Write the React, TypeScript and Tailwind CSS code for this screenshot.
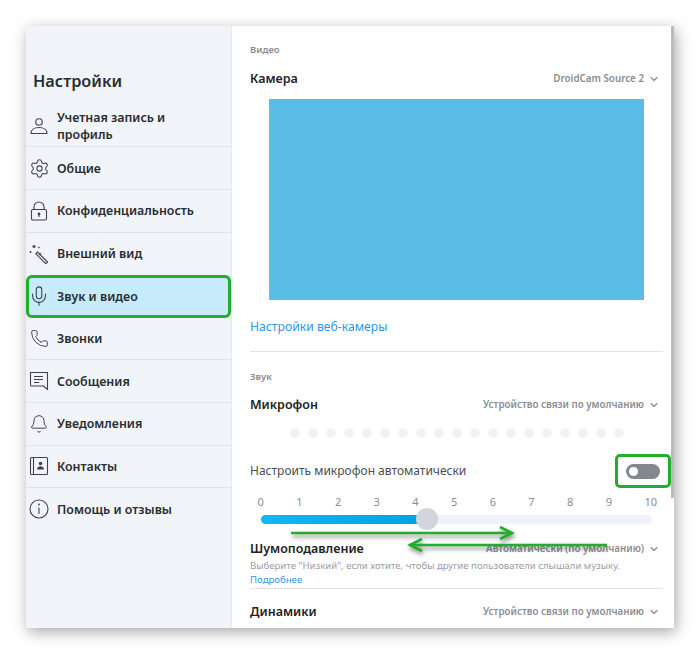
import type { ReactNode } from 'react';
import { Settings, Mic, Phone, Bell, ChevronDown } from 'lucide-react';

const Icon = ({ children }: { children: ReactNode }) => (
  <svg width="20" height="20" viewBox="0 0 20 20" fill="none" stroke="#3f444b" strokeWidth="1.1">
    {children}
  </svg>
);

const Person = () => (
  <Icon>
    <circle cx="10" cy="6" r="3.3" />
    <path d="M2 17.5c0-3.5 3-6 8-6s8 2.5 8 6z" strokeLinejoin="round" />
  </Icon>
);

const Padlock = () => (
  <Icon>
    <rect x="2.5" y="8.5" width="15" height="10.5" rx="1.2" />
    <path d="M5 8.5V6a5 5 0 0 1 10 0v2.5" />
    <circle cx="10" cy="13" r="1.4" fill="#3f444b" stroke="none" />
    <path d="M10 13.5v2.5" />
  </Icon>
);

const Wand = () => (
  <Icon>
    <path d="M8.5 8l10 10-1.7 1.7-10-10z" strokeLinejoin="round" />
    <path d="M10 11l1.8-1.8" />
    <path d="M5 1v3M3.5 2.5h3" strokeWidth="1.4" />
    <circle cx="1.5" cy="8" r="1" fill="#3f444b" stroke="none" />
    <circle cx="10" cy="3.5" r="0.8" fill="#3f444b" stroke="none" />
  </Icon>
);

const Message = () => (
  <Icon>
    <path d="M1.5 1.5h17v17l-4-3.5H2.5a1 1 0 0 1-1-1z" strokeLinejoin="round" />
    <path d="M5 5.5h9M5 8.5h9M5 11.5h5" />
  </Icon>
);

const Contacts = () => (
  <Icon>
    <rect x="1.5" y="1.5" width="17" height="17" rx="1" />
    <path d="M4.5 1.5v17" />
    <circle cx="11.5" cy="7.5" r="1.8" fill="#3f444b" stroke="none" />
    <path d="M8 13.5c0-2.4 1.7-3.3 3.5-3.3s3.5.9 3.5 3.3z" fill="#3f444b" stroke="none" />
  </Icon>
);

const Info = () => (
  <Icon>
    <circle cx="10" cy="10" r="9" />
    <path d="M10 8.5v6.5" />
    <circle cx="10" cy="5.5" r="0.9" fill="#3f444b" stroke="none" />
  </Icon>
);

const menu: { label: ReactNode; icon: ReactNode; selected?: boolean; tall?: boolean }[] = [
  { label: <>Учетная запись и<br />профиль</>, icon: <Person />, tall: true },
  { label: 'Общие', icon: <Settings size={21} strokeWidth={1.2} /> },
  { label: 'Конфиденциальность', icon: <Padlock /> },
  { label: 'Внешний вид', icon: <Wand /> },
  { label: 'Звук и видео', icon: <Mic size={22} strokeWidth={1.2} />, selected: true },
  { label: 'Звонки', icon: <Phone size={19} strokeWidth={1.2} /> },
  { label: 'Сообщения', icon: <Message /> },
  { label: 'Уведомления', icon: <Bell size={20} strokeWidth={1.2} /> },
  { label: 'Контакты', icon: <Contacts /> },
  { label: 'Помощь и отзывы', icon: <Info /> },
];

const Device = ({ name }: { name: string }) => (
  <span className="flex items-center gap-1 text-[9.8px] font-semibold text-[#8a8d93]">
    {name}
    <ChevronDown size={12} strokeWidth={2.4} />
  </span>
);

const Row = ({ title, device }: { title: string; device: string }) => (
  <div className="flex items-center justify-between pr-[3px]">
    <span className="text-[12.5px] leading-[20px] font-semibold text-[#222]">{title}</span>
    <Device name={device} />
  </div>
);

const ticks = [0, 1, 2, 3, 4, 5, 6, 7, 8, 9, 10];
const dots = Array.from({ length: 19 }, (_, i) => i);

// Green annotation arrow drawn over the slider
const Arrow = ({ flip, length, className }: { flip?: boolean; length: number; className: string }) => (
  <svg
    className={`absolute drop-shadow-[1px_3px_2px_rgba(0,0,0,0.45)] ${className}`}
    width={length}
    height="16"
    viewBox={`0 0 ${length} 16`}
    fill="none"
    stroke="#22ad2e"
    strokeWidth="2.6"
  >
    <g transform={flip ? `translate(${length},0) scale(-1,1)` : undefined}>
      <path d={`M1 8h${length - 3}`} />
      <path d={`M${length - 15} 2l12 6-12 6`} />
    </g>
  </svg>
);

export default function App() {
  return (
    <div className="h-[654px] w-[700px] overflow-hidden bg-white pt-[26px] pl-[26px] font-['Noto_Sans',sans-serif]">
      <div className="relative flex h-[602px] w-[648px] overflow-hidden bg-white shadow-[2px_4px_14px_rgba(0,0,0,0.35)]">
        <aside className="w-[206px] shrink-0 border-r border-[#e6e9ef] bg-[#f1f4f8]">
          <h1 className="h-[66px] pt-[43px] pl-[7px] text-[16.3px] leading-[24px] font-semibold text-[#2a2d31]">Настройки</h1>
          <nav className="mt-[13px]">
            {menu.map((item, i) => (
              <div
                key={i}
                className={`flex text-[12.4px] leading-[17px] font-semibold text-[#2a2d31] ${item.tall ? 'h-[42.4px] items-start pt-[4px]' : 'h-[42.6px] items-center'} ${
                  item.selected
                    ? 'rounded-[6px] bg-[#c6ebfb] shadow-[inset_0_0_0_3px_#22ad2e]'
                    : i < 9 && !menu[i + 1]?.selected
                      ? 'border-b border-[#e1e5eb]'
                      : ''
                }`}
              >
                <span className={`mr-[5px] flex w-[26px] shrink-0 justify-center text-[#3f444b] ${item.tall ? 'mt-[7px]' : ''}`}>{item.icon}</span>
                <span>{item.label}</span>
              </div>
            ))}
          </nav>
        </aside>

        <main className="min-w-0 flex-1 pt-[16px] pr-[11px] pl-[18px]">
          <div className="text-[9.5px] leading-[16px] font-semibold text-[#8a8d93]">Видео</div>
          <div className="mt-[11px]">
            <Row title="Камера" device="DroidCam Source 2" />
          </div>
          <div className="mx-[19px] mt-[10px] h-[201px] bg-[#59bde5]" />
          <a className="mt-[17px] block text-[12.2px] leading-[20px] text-[#2f96e4]">Настройки веб-камеры</a>
          <div className="mt-[14px] border-t border-[#e1e5eb]" />
          <div className="mt-[17px] text-[9.5px] leading-[16px] font-semibold text-[#8a8d93]">Звук</div>
          <div className="mt-[10px]">
            <Row title="Микрофон" device="Устройство связи по умолчанию" />
          </div>
          <div className="mt-[13px] flex gap-[8px] pl-[40px]">
            {dots.map((d) => (
              <span key={d} className="size-[10px] rounded-full bg-[#eff2f8]" />
            ))}
          </div>
          <div className="mt-[16px] flex h-[34px] items-center justify-between">
            <span className="text-[12px] text-[#4a4d52]">Настроить микрофон автоматически</span>
            <span className="-mr-[8px] flex h-[34px] w-[56px] items-center justify-center rounded-[5px] border-[3px] border-[#22ad2e]">
              <span className="flex h-[15px] w-[34px] items-center rounded-full bg-[#85878c] pl-[3px]">
                <span className="size-[9px] rounded-full bg-white" />
              </span>
            </span>
          </div>
          <div className="mt-[6px] ml-[7.5px] flex text-[11px] leading-[16px] text-[#8a8d93]">
            {ticks.map((t) => (
              <span key={t} className="w-[38.7px] shrink-0 last:w-auto">{t}</span>
            ))}
          </div>
          <div className="relative mt-[5px] ml-[11px] h-[9px] w-[391px] rounded-full bg-[#eff2f8]">
            <div className="h-[9px] w-[166px] rounded-full bg-gradient-to-r from-[#0fb9f2] to-[#00a2e2]" />
            <span className="absolute top-[-7px] left-[155px] size-[22px] rounded-full bg-[#d1d5dc]" />
          </div>
          <div className="mt-[15px]">
            <Row title="Шумоподавление" device="Автоматически (по умолчанию)" />
          </div>
          <p className="text-[9.6px] leading-[14px] text-[#9a9da3]">
            Выберите "Низкий", если хотите, чтобы другие пользователи слышали музыку.
          </p>
          <a className="block text-[9.6px] leading-[14px] text-[#2f96e4]">Подробнее</a>
          <div className="mt-[1px] border-t border-[#e1e5eb]" />
          <div className="mt-[13px]">
            <Row title="Динамики" device="Устройство связи по умолчанию" />
          </div>
        </main>

        <div className="absolute top-0 right-0 h-[472px] w-[3px] bg-[#b9bbbd]" />
        <Arrow length={225} className="top-[499px] left-[264px]" />
        <Arrow flip length={201} className="top-[511px] left-[381px]" />
      </div>
    </div>
  );
}
